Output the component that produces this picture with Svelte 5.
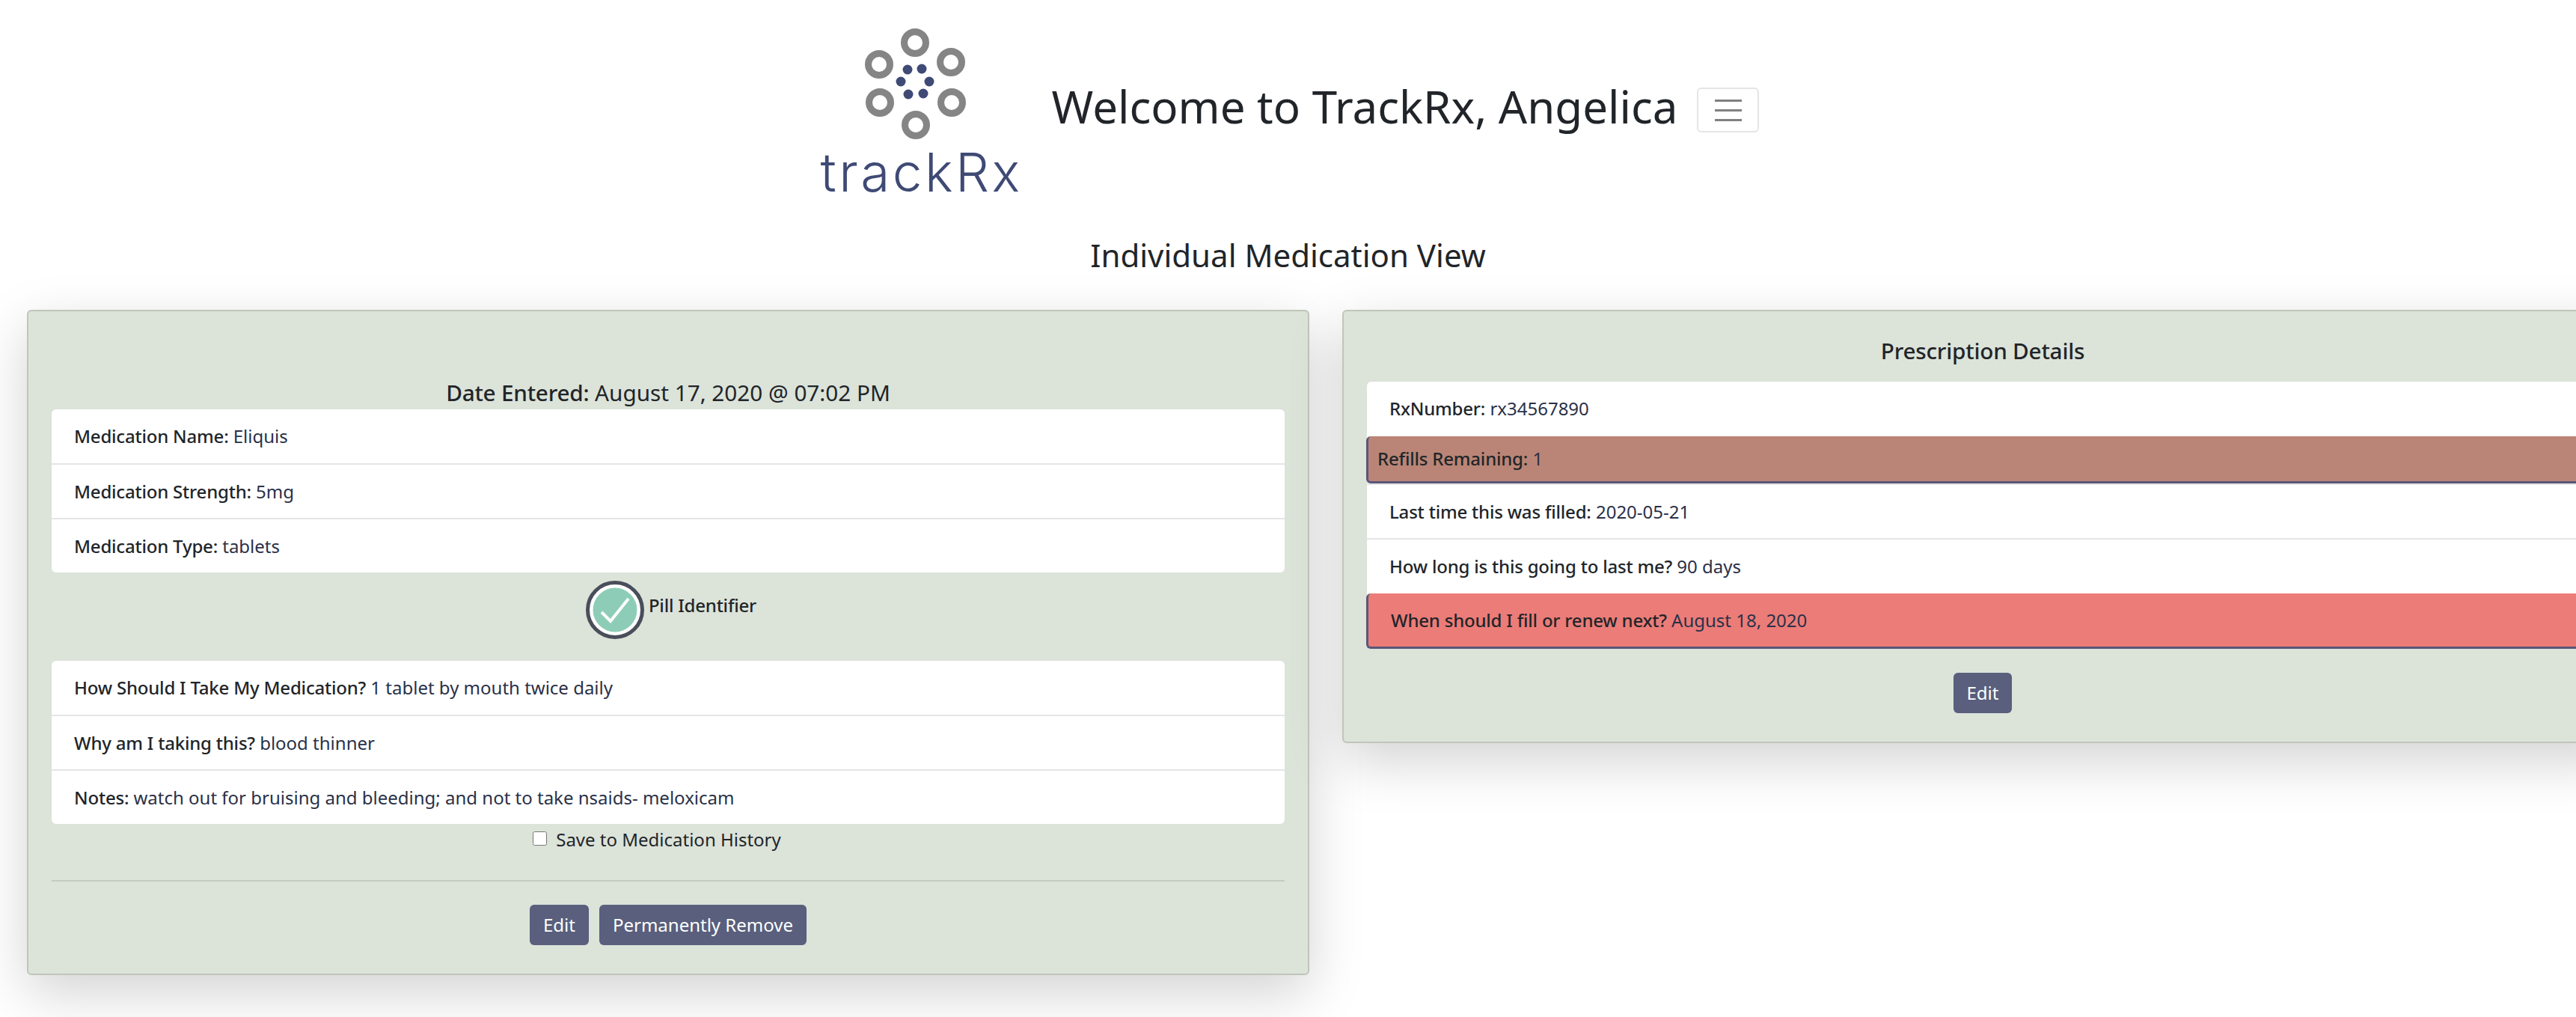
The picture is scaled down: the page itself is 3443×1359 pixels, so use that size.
<script>
	const medTop = [
		{ label: 'Medication Name:', value: 'Eliquis' },
		{ label: 'Medication Strength:', value: '5mg' },
		{ label: 'Medication Type:', value: 'tablets' }
	];
	const medBottom = [
		{ label: 'How Should I Take My Medication?', value: '1 tablet by mouth twice daily' },
		{ label: 'Why am I taking this?', value: 'blood thinner' },
		{ label: 'Notes:', value: 'watch out for bruising and bleeding; and not to take nsaids- meloxicam' }
	];
	const rxRows = [
		{ label: 'RxNumber:', value: 'rx34567890' },
		{ label: 'Refills Remaining:', value: '1', cls: 'refill' },
		{ label: 'Last time this was filled:', value: '2020-05-21' },
		{ label: 'How long is this going to last me?', value: '90 days' },
		{ label: 'When should I fill or renew next?', value: 'August 18, 2020', cls: 'renew' }
	];
	const rings = [[163, 37], [115, 66], [211, 63], [116, 117], [212, 117], [164, 147]];
	const dots = [[153, 73], [172, 72], [144, 89], [182, 89], [154, 106], [174, 105]];
</script>

<header>
	<div class="logo">
		<svg width="200" height="170" viewBox="72 0 200 170">
			{#each rings as r}
				<circle cx={r[0]} cy={r[1]} r="14.5" fill="none" stroke="#858585" stroke-width="9" />
			{/each}
			{#each dots as d}
				<circle cx={d[0]} cy={d[1]} r="6.5" fill="#3f4a75" />
			{/each}
		</svg>
		<span class="wordmark">trackRx</span>
	</div>
	<h1>Welcome to TrackRx, Angelica</h1>
	<button class="toggler" aria-label="Menu"><i></i><i></i><i></i></button>
</header>

<h2>Individual Medication View</h2>

<main>
	<section class="card left">
		<h3 class="date"><b>Date Entered:</b> August 17, 2020 @ 07:02 PM</h3>
		<ul>
			{#each medTop as row}
				<li><b>{row.label}</b> <span>{row.value}</span></li>
			{/each}
		</ul>
		<div class="pill">
			<svg width="78" height="78" viewBox="0 0 78 78">
				<circle cx="39" cy="39" r="36.5" fill="#fff" stroke="#4a4d5a" stroke-width="5" />
				<circle cx="39" cy="39" r="29.5" fill="#8dcdb7" />
				<path d="M21 42 L33 54 L57 24" fill="none" stroke="#fff" stroke-width="4" />
			</svg>
			<b>Pill Identifier</b>
		</div>
		<ul>
			{#each medBottom as row}
				<li><b>{row.label}</b> <span>{row.value}</span></li>
			{/each}
		</ul>
		<label class="history"><input type="checkbox" /> Save to Medication History</label>
		<hr />
		<div class="actions">
			<button class="btn">Edit</button>
			<button class="btn">Permanently Remove</button>
		</div>
	</section>

	<section class="card right">
		<h3 class="details">Prescription Details</h3>
		<ul>
			{#each rxRows as row}
				<li class={row.cls}><b>{row.label}</b> <span>{row.value}</span></li>
			{/each}
		</ul>
		<div class="actions rx">
			<button class="btn">Edit</button>
		</div>
	</section>
</main>

<style>
	:global(body) {
		font-family: "Noto Sans", sans-serif;
		font-size: 24px;
		line-height: 36px;
		color: #212529;
		background: #fff;
		overflow: hidden;
	}

	header {
		display: flex;
		justify-content: center;
		align-items: flex-start;
		height: 290px;
		box-sizing: border-box;
	}

	.logo {
		width: 280px;
		padding-top: 20px;
		display: flex;
		flex-direction: column;
		align-items: center;
	}

	.wordmark {
		font-family: Inter, sans-serif;
		font-weight: 300;
		font-size: 71px;
		line-height: 80px;
		letter-spacing: 3.5px;
		color: #3f4a75;
		margin-top: 0;
	}

	h1 {
		font-size: 60px;
		font-weight: 400;
		line-height: 72px;
		margin: 106px 0 0 34px;
		color: #212529;
	}

	.toggler {
		width: 83px;
		height: 60px;
		margin: 117px 0 0 26px;
		padding: 0;
		background: #fff;
		border: 2px solid rgba(0, 0, 0, 0.1);
		border-radius: 6px;
		display: flex;
		flex-direction: column;
		align-items: center;
		justify-content: center;
		gap: 10px;
	}

	.toggler i {
		width: 36px;
		height: 3px;
		background: #808080;
	}

	h2 {
		text-align: center;
		font-size: 42px;
		font-weight: 400;
		line-height: 50px;
		margin: 26px 0 0;
	}

	main {
		display: grid;
		grid-template-columns: 1714px 1712px;
		gap: 44px;
		align-items: start;
		padding: 48px 0 60px 36px;
		width: 3520px;
	}

	.card {
		background: #dce3d9;
		border: 2px solid #bfc6b9;
		border-radius: 6px;
		box-shadow: 0 24px 72px rgba(0, 0, 0, 0.175);
		padding: 0 31px;
	}

	h3 {
		margin: 0;
		text-align: center;
		font-size: 29.7px;
		font-weight: 400;
		line-height: 36px;
	}

	.date {
		padding: 91px 0 4px;
	}

	.date b, .details {
		font-weight: 500;
		letter-spacing: -0.2px;
	}

	.details {
		padding: 35px 0 23px;
	}

	ul {
		list-style: none;
		margin: 0;
		padding: 0;
		background: #fff;
		border-radius: 6px;
	}

	li {
		padding: 18px 30px;
		border-top: 2px solid #e4e5e6;
		height: 73px;
		box-sizing: border-box;
		line-height: 35px;
	}

	li:first-child {
		border-top: 0;
		height: 72px;
	}

	li b {
		font-weight: 500;
		letter-spacing: -0.2px;
	}

	li span {
		color: #2a3148;
	}

	li.refill, li.renew {
		border: 0;
		border-left: 3px solid #5a5678;
		border-bottom: 3px solid #5a5678;
		border-radius: 6px;
		margin: 1px 0 0 -1px;
	}

	li.refill {
		background: #ba8576;
		height: 63px;
		padding: 12px;
	}

	li.renew {
		background: #ec7c78;
		height: 74px;
	}

	.pill {
		display: flex;
		justify-content: center;
		align-items: flex-start;
		gap: 6px;
		height: 118px;
		padding: 11px 0 0 8px;
		box-sizing: border-box;
	}

	.pill b {
		font-weight: 500;
		letter-spacing: -0.2px;
		line-height: 66px;
	}

	.history {
		display: flex;
		justify-content: center;
		align-items: center;
		gap: 12px;
		height: 42px;
		padding-right: 30px;
	}

	.history input {
		width: 19px;
		height: 19px;
		margin: 0 0 4px;
	}

	hr {
		border: 0;
		border-top: 2px solid #c5cbc2;
		margin: 33px 0 31px;
	}

	.actions {
		display: flex;
		justify-content: center;
		gap: 14px;
		padding-bottom: 38px;
	}

	.actions.rx {
		padding-top: 32px;
		padding-bottom: 38px;
	}

	.btn {
		height: 54px;
		padding: 0 18px;
		font: inherit;
		color: #fff;
		background: #595f7d;
		border: 0;
		border-radius: 6px;
	}
</style>
